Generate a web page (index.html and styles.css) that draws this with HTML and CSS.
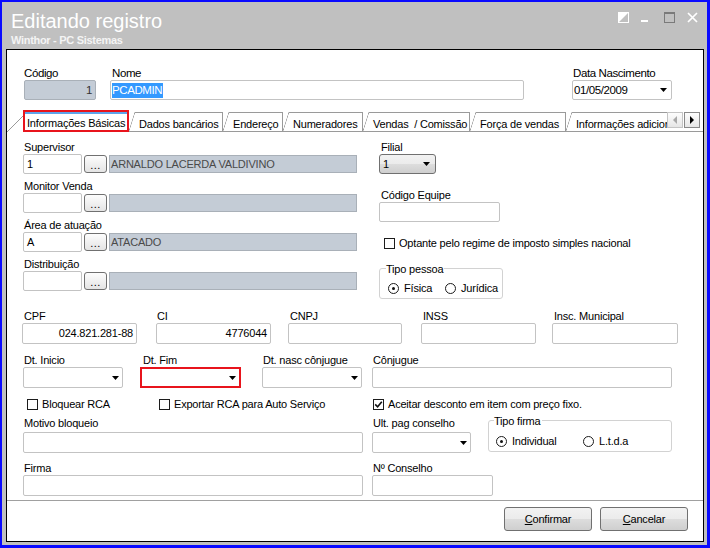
FILE: index.html
```html
<!DOCTYPE html>
<html lang="pt-BR">
<head>
    <meta charset="UTF-8">
    <meta name="viewport" content="width=device-width, initial-scale=1.0">
    <title>Editando registro</title>
    <link rel="stylesheet" href="styles.css">
</head>
<body>
<div class="window">
    <div class="titlebar">
        <div class="caption">
            <div class="title">Editando registro</div>
            <div class="subtitle">Winthor - PC Sistemas</div>
        </div>
        <div class="wbuttons">
            <svg width="11" height="11" viewBox="0 0 11 11"><rect x="0.5" y="0.5" width="10" height="10" fill="none" stroke="#fff"/><polygon points="0,0 11,0 0,11" fill="#fff"/></svg>
            <svg width="11" height="11" viewBox="0 0 11 11"><rect x="0" y="8" width="7" height="2" fill="#fff"/></svg>
            <svg width="11" height="11" viewBox="0 0 11 11"><rect x="0.5" y="0.5" width="10" height="10" fill="none" stroke="#7a7a7a"/><rect x="0" y="0" width="11" height="2" fill="#7a7a7a"/></svg>
            <svg width="11" height="11" viewBox="0 0 11 11"><path d="M1 1 L10 10 M10 1 L1 10" stroke="#fff" stroke-width="1.7"/></svg>
        </div>
    </div>

    <div class="panel">
        <div class="header">
            <div class="f-codigo">
                <div class="hlabel">Código</div>
                <div class="hinput locked num">1</div>
            </div>
            <div class="f-nome">
                <div class="hlabel">Nome</div>
                <div class="hinput"><span class="selected">PCADMIN</span></div>
            </div>
            <div class="f-nasc">
                <div class="hlabel">Data Nascimento</div>
                <div class="hinput combo">01/05/2009<svg class="arrow" width="7" height="4" viewBox="0 0 7 4"><path d="M0 0h7L3.5 4z"/></svg></div>
            </div>
        </div>

        <div class="tabstrip">
            <div class="tablist">
                <div class="tab active"><span class="mark">Informações Básicas</span></div>
                <div class="tab t-dados">Dados bancários</div>
                <div class="tab t-end">Endereço</div>
                <div class="tab t-num">Numeradores</div>
                <div class="tab t-vendas">Vendas &nbsp;/ Comissão</div>
                <div class="tab t-forca">Força de vendas</div>
                <div class="tab t-info">Informações adicionais</div>
            </div>
            <div class="tabscroll">
                <span class="sbtn off"><span class="tri-left"></span></span>
                <span class="sbtn"><span class="tri-right"></span></span>
            </div>
        </div>

        <div class="page">
            <div class="col-left">
                <div class="lfield">
                    <div class="lbl">Supervisor</div>
                    <div class="lookup">
                        <div class="box code">1</div>
                        <div class="dots">...</div>
                        <div class="desc">ARNALDO LACERDA VALDIVINO</div>
                    </div>
                </div>
                <div class="lfield">
                    <div class="lbl">Monitor Venda</div>
                    <div class="lookup">
                        <div class="box code"></div>
                        <div class="dots">...</div>
                        <div class="desc"></div>
                    </div>
                </div>
                <div class="lfield">
                    <div class="lbl">Área de atuação</div>
                    <div class="lookup">
                        <div class="box code">A</div>
                        <div class="dots">...</div>
                        <div class="desc">ATACADO</div>
                    </div>
                </div>
                <div class="lfield">
                    <div class="lbl">Distribuição</div>
                    <div class="lookup">
                        <div class="box code"></div>
                        <div class="dots">...</div>
                        <div class="desc"></div>
                    </div>
                </div>
            </div>

            <div class="col-right">
                <div class="lbl pl2">Filial</div>
                <div class="select">1<svg class="arrow" width="7" height="4" viewBox="0 0 7 4"><path d="M0 0h7L3.5 4z"/></svg></div>

                <div class="lbl pl2 mt14">Código Equipe</div>
                <div class="box w-equipe"></div>

                <div class="check mt14 pl5"><span class="cb"></span>Optante pelo regime de imposto simples nacional</div>

                <div class="group g-pessoa">
                    <div class="legend">Tipo pessoa</div>
                    <div class="radios">
                        <span class="radio r-fisica"><span class="rb on"></span>Física</span>
                        <span class="radio"><span class="rb"></span>Jurídica</span>
                    </div>
                </div>
            </div>
        </div>

        <div class="lower">
            <div class="row row-a">
                <div class="w-cpf"><div class="lbl">CPF</div><div class="box h21 num">024.821.281-88</div></div>
                <div class="w-ci"><div class="lbl">CI</div><div class="box h21 num">4776044</div></div>
                <div class="w-cnpj"><div class="lbl">CNPJ</div><div class="box h21"></div></div>
                <div class="w-inss"><div class="lbl">INSS</div><div class="box h21"></div></div>
                <div class="w-insc"><div class="lbl">Insc. Municipal</div><div class="box h21"></div></div>
            </div>

            <div class="row mt9">
                <div class="w-ini"><div class="lbl">Dt. Inicio</div><div class="box h21 combo"><svg class="arrow" width="7" height="4" viewBox="0 0 7 4"><path d="M0 0h7L3.5 4z"/></svg></div></div>
                <div class="w-fim"><div class="lbl pl3">Dt. Fim</div><div class="box h21 combo marked"><svg class="arrow" width="7" height="4" viewBox="0 0 7 4"><path d="M0 0h7L3.5 4z"/></svg></div></div>
                <div class="w-nasc"><div class="lbl">Dt. nasc cônjugue</div><div class="box h21 combo"><svg class="arrow" width="7" height="4" viewBox="0 0 7 4"><path d="M0 0h7L3.5 4z"/></svg></div></div>
                <div class="w-conj"><div class="lbl">Cônjugue</div><div class="box h21"></div></div>
            </div>

            <div class="row mt9">
                <div class="check c-bloq"><span class="cb"></span>Bloquear RCA</div>
                <div class="check c-exp"><span class="cb"></span>Exportar RCA para Auto Serviço</div>
                <div class="check"><span class="cb"><svg width="9" height="9" viewBox="0 0 9 9"><path d="M1.2 4.4 L3.6 6.8 L7.8 1.8" fill="none" stroke="#111" stroke-width="1.6"/></svg></span>Aceitar desconto em item com preço fixo.</div>
            </div>

            <div class="row mt5">
                <div class="w-motivo"><div class="lbl">Motivo bloqueio</div><div class="box h21 mt2"></div></div>
                <div class="w-ult"><div class="lbl">Ult. pag conselho</div><div class="box h21 mt2 combo"><svg class="arrow" width="7" height="4" viewBox="0 0 7 4"><path d="M0 0h7L3.5 4z"/></svg></div></div>
                <div class="group g-firma">
                    <div class="legend">Tipo firma</div>
                    <div class="radios">
                        <span class="radio r-indiv"><span class="rb on"></span>Individual</span>
                        <span class="radio"><span class="rb"></span>L.t.d.a</span>
                    </div>
                </div>
            </div>

            <div class="row mt8">
                <div class="w-firma"><div class="lbl">Firma</div><div class="box h21"></div></div>
                <div class="w-conselho"><div class="lbl">Nº Conselho</div><div class="box h21"></div></div>
            </div>
        </div>

        <div class="footer">
            <div class="btn"><u>C</u>onfirmar</div>
            <div class="btn"><u>C</u>ancelar</div>
        </div>
    </div>
</div>
</body>
</html>
```

FILE: styles.css
```css
body {
    margin: 0;
    font-family: 'Liberation Sans', Arial, sans-serif;
    font-size: 11px;
    letter-spacing: -0.2px;
    color: #000;
    background-color: #fff;
}

.window {
    width: 710px;
    height: 548px;
    box-sizing: border-box;
    border-style: solid;
    border-color: #0a0aff;
    border-width: 2px 3px 3px 2px;
    background-color: #c0c0c0;
    display: flex;
    flex-direction: column;
}

/* title bar */
.titlebar {
    height: 47px;
    flex: none;
    box-sizing: border-box;
    padding: 8px 9px 0 9px;
    display: flex;
    justify-content: space-between;
    align-items: flex-start;
    color: #fff;
}

.title {
    font-size: 20px;
    line-height: 22px;
    letter-spacing: 0;
}

.subtitle {
    margin-top: 1px;
    font-size: 11px;
    font-weight: bold;
    line-height: 14px;
    letter-spacing: -0.3px;
    color: #f4f4f4;
}

.wbuttons {
    display: flex;
    gap: 12px;
    padding-top: 2px;
}

.wbuttons svg {
    display: block;
}

/* white panel */
.panel {
    flex: 1;
    margin: 0 3px 3px 4px;
    border: 1px solid #000;
    background-color: #fff;
    display: flex;
    flex-direction: column;
}

.header {
    display: flex;
    padding: 16px 0 0 17px;
    font-size: 11.5px;
    letter-spacing: -0.4px;
}

.hlabel {
    line-height: 14px;
    white-space: nowrap;
}

.hinput {
    height: 20px;
    box-sizing: border-box;
    border: 1px solid #c3c3c3;
    border-radius: 2px;
    display: flex;
    align-items: center;
    padding: 0 1px;
}

.hinput.locked {
    background-color: #c4ccd6;
    border-color: #a9b0b8;
    color: #333;
    padding-right: 3px;
}

.num {
    justify-content: flex-end;
    text-align: right;
}

.selected {
    background-color: #3399ff;
    color: #fff;
    line-height: 15px;
    padding-right: 1px;
}

.combo {
    display: flex;
    justify-content: space-between;
    align-items: center;
    padding-right: 4px;
}

.arrow {
    display: block;
    margin-left: auto;
    fill: #000;
}

.f-codigo { width: 72px; }
.f-nome { width: 414px; margin-left: 14px; }
.f-nome .hlabel { padding-left: 2px; }
.f-nasc { width: 100px; margin-left: 48px; }
.f-nasc .hlabel { padding-left: 1px; }

/* tabs */
.tabstrip {
    display: flex;
    align-items: flex-end;
    height: 22px;
    margin-top: 10px;
}

.tablist {
    display: flex;
    align-items: flex-end;
    width: 660px;
    overflow: hidden;
    flex: none;
}

.tab {
    flex: none;
    box-sizing: border-box;
    height: 20px;
    padding: 5px 0 0 10px;
    line-height: 14px;
    white-space: nowrap;
    border-right: 1px solid #9a9a9a;
    border-bottom: 1px solid #9a9a9a;
    background:
        linear-gradient(#9a9a9a, #9a9a9a) 6px 0 / calc(100% - 6px) 1px no-repeat,
        linear-gradient(to bottom right, transparent calc(50% - 0.6px), #9a9a9a 50%, transparent calc(50% + 0.6px)) 0 0 / 6px 100% no-repeat,
        #fff;
}

.tab.active {
    width: 122px;
    height: 22px;
    padding: 0 0 0 16px;
    border: none;
    background:
        linear-gradient(to bottom right, transparent calc(50% - 0.6px), #9a9a9a 50%, transparent calc(50% + 0.6px)) 0 100% / 16px 16px no-repeat,
        #fff;
}

.mark {
    display: block;
    height: 22px;
    box-sizing: border-box;
    border: 2px solid #e8141c;
    padding: 5px 0 0 2px;
    line-height: 13px;
    background: linear-gradient(#5ea4ea, #5ea4ea) 0 0 / 100% 2px no-repeat, #fff;
}

.t-dados { width: 94px; }
.t-end { width: 60px; }
.t-num { width: 80px; }
.t-vendas { width: 107px; }
.t-forca { width: 96px; }
.t-info { width: 140px; }

.tabscroll {
    flex: 1;
    height: 20px;
    box-sizing: border-box;
    border-bottom: 1px solid #9a9a9a;
    display: flex;
    gap: 1px;
    align-items: flex-start;
}

.sbtn {
    width: 16px;
    height: 16px;
    box-sizing: border-box;
    border: 1px solid #8a8a8a;
    background: linear-gradient(#fdfdfd, #e6e6e6);
    display: flex;
    align-items: center;
    justify-content: center;
}

.sbtn.off {
    border-color: #c4c4c4;
}

.tri-left {
    width: 0;
    height: 0;
    border-top: 4px solid transparent;
    border-bottom: 4px solid transparent;
    border-right: 4px solid #a8a8a8;
}

.tri-right {
    width: 0;
    height: 0;
    border-top: 4px solid transparent;
    border-bottom: 4px solid transparent;
    border-left: 4px solid #000;
}

/* tab page */
.page {
    display: flex;
    padding: 8px 0 0 16px;
}

.col-left {
    width: 334px;
}

.col-right {
    margin-left: 22px;
}

.lfield {
    margin-bottom: 5px;
}

.lfield:last-child {
    margin-bottom: 0;
}

.lbl {
    line-height: 14px;
    white-space: nowrap;
    padding-left: 1px;
}

.lookup {
    display: flex;
    align-items: center;
    height: 20px;
}

.box {
    height: 20px;
    box-sizing: border-box;
    border: 1px solid #c3c3c3;
    border-radius: 2px;
    background-color: #fff;
    padding: 0 3px;
    line-height: 18px;
    white-space: nowrap;
}

.box.h21 {
    height: 21px;
    line-height: 19px;
}

.box.num {
    padding-right: 3px;
}

.box.marked {
    border: 2px solid #e8141c;
    border-radius: 0;
}

.code {
    width: 59px;
    flex: none;
}

.dots {
    width: 23px;
    height: 18px;
    flex: none;
    margin-left: 2px;
    box-sizing: border-box;
    border: 1px solid #707070;
    border-radius: 3px;
    background: linear-gradient(#fdfdfd, #e4e4e4);
    text-align: center;
    padding-top: 2px;
    line-height: 14px;
    letter-spacing: 0.5px;
}

.desc {
    width: 248px;
    height: 18px;
    flex: none;
    margin-left: 2px;
    box-sizing: border-box;
    border: 1px solid #a9b0b8;
    background-color: #c4ccd6;
    color: #4a4a4a;
    padding-left: 1px;
    line-height: 16px;
    white-space: nowrap;
}

.select {
    width: 57px;
    height: 20px;
    box-sizing: border-box;
    border: 1px solid #707070;
    border-radius: 3px;
    background: linear-gradient(#f2f2f2, #ebebeb 50%, #dddddd 50%, #cfcfcf);
    display: flex;
    align-items: center;
    padding: 0 5px 0 3px;
}

.w-equipe {
    width: 121px;
}

.check {
    display: flex;
    align-items: center;
    line-height: 14px;
    white-space: nowrap;
    flex: none;
}

.cb {
    width: 11px;
    height: 11px;
    flex: none;
    box-sizing: border-box;
    border: 1px solid #1c1c1c;
    background-color: #fff;
    margin-right: 4px;
    display: flex;
    align-items: center;
    justify-content: center;
}

.cb svg {
    display: block;
}

.group {
    box-sizing: border-box;
    border: 1px solid #d2d2d2;
    border-radius: 3px;
    flex: none;
}

.legend {
    width: fit-content;
    margin: -7px 0 0 6px;
    padding: 0 1px 0 0;
    line-height: 14px;
    background-color: #fff;
    white-space: nowrap;
}

.radios {
    display: flex;
    line-height: 14px;
}

.radio {
    display: flex;
    align-items: center;
    white-space: nowrap;
}

.rb {
    width: 11px;
    height: 11px;
    flex: none;
    box-sizing: border-box;
    border: 1px solid #1c1c1c;
    border-radius: 50%;
    margin-right: 5px;
    display: flex;
    align-items: center;
    justify-content: center;
}

.rb.on::after {
    content: "";
    width: 3px;
    height: 3px;
    border-radius: 50%;
    background-color: #111;
}

.g-pessoa {
    width: 124px;
    height: 31px;
    margin-top: 18px;
}

.g-pessoa .legend {
    margin-left: 6px;
}

.g-pessoa .radios {
    margin-top: 5px;
    padding-left: 8px;
}

.r-fisica { width: 57px; }

.g-firma {
    width: 184px;
    height: 32px;
    margin: 4px 0 0 17px;
}

.g-firma .legend {
    margin-left: 5px;
}

.g-firma .radios {
    margin-top: 6px;
    padding-left: 7px;
}

.r-indiv { width: 87px; }

/* lower part */
.lower {
    padding: 10px 0 0 15px;
}

.row {
    display: flex;
    align-items: flex-start;
}

.row > div {
    flex: none;
}

.row-a .lbl { padding-left: 2px; }

.w-cpf { width: 115px; }
.w-ci { width: 115px; margin-left: 19px; }
.row-a .w-ci .lbl { padding-left: 1px; }
.w-cnpj { width: 114px; margin-left: 17px; }
.w-inss { width: 115px; margin-left: 19px; }
.w-insc { width: 126px; margin-left: 16px; }

.w-ini { width: 100px; margin-left: 1px; }
.w-fim { width: 101px; margin-left: 17px; }
.w-nasc { width: 100px; margin-left: 21px; }
.w-conj { width: 300px; margin-left: 10px; }

.c-bloq { width: 132px; margin-left: 5px; }
.c-exp { width: 214px; }

.w-motivo { width: 340px; margin-left: 1px; }
.w-ult { width: 99px; margin-left: 9px; }

.w-firma { width: 340px; margin-left: 1px; }
.w-conselho { width: 121px; margin-left: 9px; }

.mt2 { margin-top: 2px; }
.mt5 { margin-top: 5px; }
.mt8 { margin-top: 8px; }
.mt9 { margin-top: 9px; }
.mt14 { margin-top: 14px; }
.pl2 { padding-left: 2px; }
.pl3 { padding-left: 3px; }
.pl5 { padding-left: 5px; }

/* buttons */
.footer {
    margin-top: 4px;
    border-top: 1px solid #a0a0a0;
    padding: 6px 15px 0 0;
    display: flex;
    justify-content: flex-end;
    gap: 8px;
}

.btn {
    width: 88px;
    height: 24px;
    box-sizing: border-box;
    border: 1px solid #707070;
    border-radius: 3px;
    background: linear-gradient(#f2f2f2, #ebebeb 50%, #dddddd 50%, #cfcfcf);
    display: flex;
    align-items: center;
    justify-content: center;
}
```
